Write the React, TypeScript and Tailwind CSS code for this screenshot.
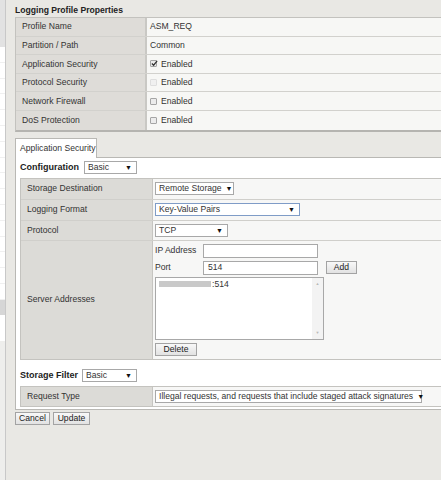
import React from "react";

const font = { fontFamily: '"Liberation Sans", Arial, sans-serif' };

function Select({ label, width, focused = false }: { label: string; width: number; focused?: boolean }) {
  return (
    <div
      className={`flex items-center justify-between h-[13px] bg-white border pl-[3px] pr-[4px] ${
        focused ? "border-[#7f9cc7]" : "border-[#a8a8a8]"
      }`}
      style={{ width }}
    >
      <span className="leading-[11px] whitespace-nowrap">{label}</span>
      <span className="text-[7px] leading-[7px] text-[#111] ml-[4px]">▼</span>
    </div>
  );
}

function Button({ label, width }: { label: string; width: number }) {
  return (
    <div
      className="flex items-center justify-center h-[13px] border border-[#a3a3a3] bg-gradient-to-b from-[#f8f8f8] to-[#e2e2e2] text-[#222] leading-[11px]"
      style={{ width }}
    >
      {label}
    </div>
  );
}

function Checkbox({ state }: { state: "checked" | "unchecked" | "disabled" }) {
  return (
    <span
      className={`relative inline-block w-[7px] h-[7px] mr-[4px] border rounded-[1px] ${
        state === "disabled" ? "border-[#dedede] bg-[#f0f0f0]" : "border-[#a5a5a5] bg-[#ececec]"
      }`}
    >
      {state === "checked" && (
        <svg viewBox="0 0 8 8" className="absolute left-[0px] top-[-1px] w-[7px] h-[7px]">
          <path d="M1 4 L3 6 L7 1" fill="none" stroke="#333" strokeWidth="1.4" />
        </svg>
      )}
    </span>
  );
}

function PropRow({ label, children }: { label: string; children: React.ReactNode }) {
  return (
    <div className="flex h-[18.6px] border-b border-[#d2d1cd] last:border-b-0">
      <div className="w-[131px] shrink-0 bg-[#dedcd8] pl-[6px] flex items-center border-r-2 border-[#c9c8c4]">
        {label}
      </div>
      <div className="flex-1 bg-[#f7f7f5] pl-[3px] flex items-center">{children}</div>
    </div>
  );
}

function ConfRow({ label, h, children }: { label: string; h: string; children: React.ReactNode }) {
  return (
    <div className={`flex ${h} border-b border-[#d0cfcb] last:border-b-0`}>
      <div className="w-[132px] shrink-0 bg-[#dcdbd7] pl-[6px] flex items-center border-r border-[#c6c5c1]">
        {label}
      </div>
      <div className="flex-1 bg-[#f7f7f6] pl-[2px] flex flex-col justify-center">{children}</div>
    </div>
  );
}

function Sidebar() {
  return (
    <div className="w-[6px] shrink-0 flex flex-col border-r border-[#c8c8c8]">
      <div className="h-[47px] bg-[#e2e2e2]" />
      <div className="h-[253px] bg-white flex flex-col">
        {Array.from({ length: 16 }).map((_, i) => (
          <div key={i} className="h-[15.8px] border-b border-[#f0f0f0]" />
        ))}
      </div>
      <div className="h-[15px] bg-[#d6d6d6]" />
      <div className="h-[26px] bg-white" />
      <div className="flex-1 bg-[#eeeeec]" />
    </div>
  );
}

export default function App() {
  return (
    <div
      className="w-[441px] h-[480px] overflow-hidden bg-[#e9e8e4] flex text-[8.6px] text-[#333]"
      style={font}
    >
      <Sidebar />
      <div className="pl-[9px] pt-[4px] w-[520px] shrink-0">
        <div className="h-[13px] leading-[13px] font-bold text-[#222]">Logging Profile Properties</div>

        <div className="border border-[#c3c2be] border-b-2 border-b-[#b5b4b0]">
          <PropRow label="Profile Name">ASM_REQ</PropRow>
          <PropRow label="Partition / Path">Common</PropRow>
          <PropRow label="Application Security">
            <Checkbox state="checked" />
            Enabled
          </PropRow>
          <PropRow label="Protocol Security">
            <Checkbox state="disabled" />
            Enabled
          </PropRow>
          <PropRow label="Network Firewall">
            <Checkbox state="unchecked" />
            Enabled
          </PropRow>
          <PropRow label="DoS Protection">
            <Checkbox state="unchecked" />
            Enabled
          </PropRow>
        </div>

        <div className="flex h-[26px] pt-[6px]">
          <div className="w-[82px] bg-white border-l border-t border-r border-[#b9b8b4] pl-[4px] flex items-center">
            Application Security
          </div>
          <div className="flex-1 border-b border-[#b9b8b4]" />
        </div>

        <div className="bg-white border-l border-b border-[#b9b8b4] pl-[4px] pb-[2px]">
          <div className="flex items-center h-[20px]">
            <span className="font-bold text-[#222] text-[9px] mr-[5px]">Configuration</span>
            <Select label="Basic" width={53} />
          </div>

          <div className="border border-[#c4c3bf]">
            <ConfRow label="Storage Destination" h="h-[21px]">
              <Select label="Remote Storage" width={79} />
            </ConfRow>
            <ConfRow label="Logging Format" h="h-[21px]">
              <Select label="Key-Value Pairs" width={145} focused />
            </ConfRow>
            <ConfRow label="Protocol" h="h-[20px]">
              <Select label="TCP" width={73} />
            </ConfRow>
            <ConfRow label="Server Addresses" h="h-[118px]">
              <div className="flex flex-col">
                <div className="flex items-center h-[14px]">
                  <span className="w-[48px]">IP Address</span>
                  <div className="w-[115px] h-[14px] bg-white border border-[#a8a8a8]" />
                </div>
                <div className="flex items-center h-[14px] mt-[3px]">
                  <span className="w-[48px]">Port</span>
                  <div className="w-[115px] h-[14px] bg-white border border-[#a8a8a8] pl-[4px] flex items-center">
                    514
                  </div>
                  <div className="ml-[8px]">
                    <Button label="Add" width={31} />
                  </div>
                </div>
                <div className="flex w-[169px] h-[63px] mt-[2px] bg-white border border-[#a8a8a8]">
                  <div className="flex-1 pl-[3px] pt-[2px]">
                    <div className="flex items-center h-[9px]">
                      <span className="inline-block w-[52px] h-[6px] bg-[#c9c9c9]" />
                      <span className="ml-[1px]">:514</span>
                    </div>
                  </div>
                  <div className="w-[11px] bg-[#f3f3f3] flex flex-col justify-between items-center py-[3px] text-[4px] text-[#b8b8b8]">
                    <span>▲</span>
                    <span>▼</span>
                  </div>
                </div>
                <div className="mt-[3px]">
                  <Button label="Delete" width={42} />
                </div>
              </div>
            </ConfRow>
          </div>

          <div className="flex items-center h-[26px] pt-[6px]">
            <span className="font-bold text-[#222] text-[9px] mr-[4px]">Storage Filter</span>
            <Select label="Basic" width={55} />
          </div>

          <div className="border border-[#c4c3bf]">
            <ConfRow label="Request Type" h="h-[19px]">
              <Select label="Illegal requests, and requests that include staged attack signatures" width={267} />
            </ConfRow>
          </div>
        </div>

        <div className="flex gap-[3px] mt-[2px]">
          <Button label="Cancel" width={35} />
          <Button label="Update" width={37} />
        </div>
      </div>
    </div>
  );
}
